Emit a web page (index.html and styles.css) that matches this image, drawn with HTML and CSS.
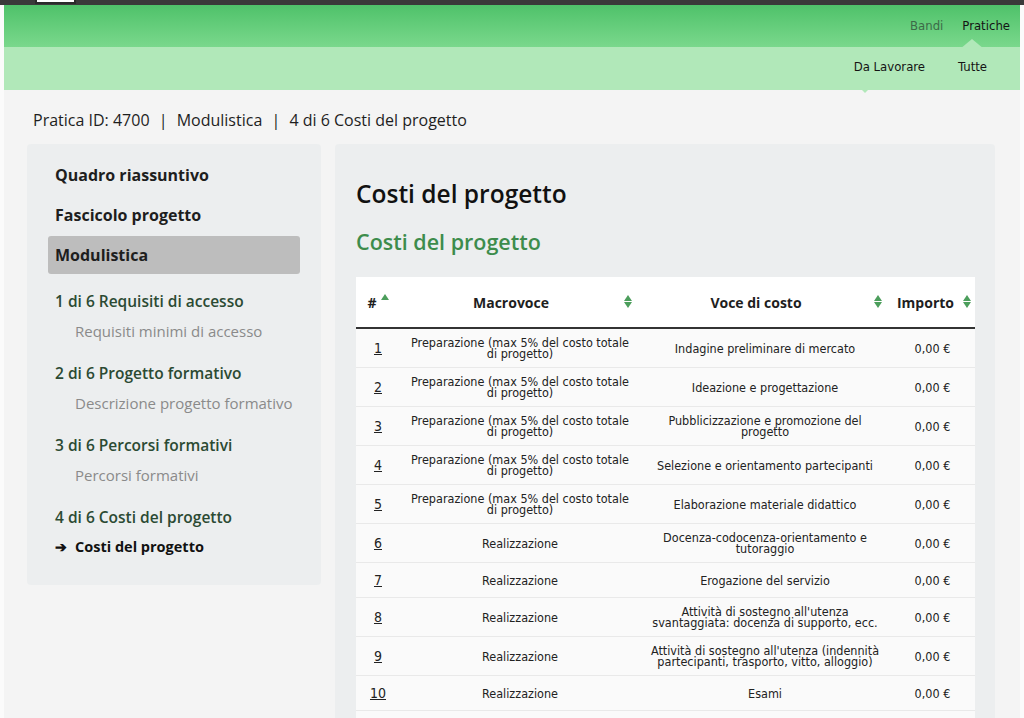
FILE: index.html
```html
<!DOCTYPE html>
<html lang="it">
<head>
<meta charset="utf-8">
<title>Costi del progetto</title>
<link rel="stylesheet" href="styles.css">
</head>
<body>
<div class="topbar"><div class="logo"></div></div>
<div class="page">
  <nav class="nav-main">
    <a class="nav-link">Bandi</a>
    <a class="nav-link active">Pratiche</a>
  </nav>
  <nav class="nav-sub">
    <a class="sub-link active">Da Lavorare</a>
    <a class="sub-link">Tutte</a>
  </nav>
  <main class="content">
    <div class="breadcrumb">Pratica ID: 4700 <span class="sep">|</span> Modulistica <span class="sep">|</span> 4 di 6 Costi del progetto</div>
    <div class="layout">
      <aside class="sidebar">
        <div class="side-item">Quadro riassuntivo</div>
        <div class="side-item">Fascicolo progetto</div>
        <div class="side-item selected">Modulistica</div>
        <div class="steps">
          <div class="step-title">1 di 6 Requisiti di accesso</div>
          <div class="step-sub">Requisiti minimi di accesso</div>
          <div class="step-title">2 di 6 Progetto formativo</div>
          <div class="step-sub">Descrizione progetto formativo</div>
          <div class="step-title">3 di 6 Percorsi formativi</div>
          <div class="step-sub">Percorsi formativi</div>
          <div class="step-title">4 di 6 Costi del progetto</div>
          <div class="step-sub current"><span class="arrow">&#10132;</span>Costi del progetto</div>
        </div>
      </aside>
      <section class="panel">
        <h1 class="title">Costi del progetto</h1>
        <h2 class="subtitle">Costi del progetto</h2>
        <table class="grid">
          <colgroup>
            <col class="c-num"><col class="c-macro"><col class="c-voce"><col class="c-imp">
          </colgroup>
          <thead>
            <tr>
              <th class="th-num">#<span class="sort-up"></span></th>
              <th class="th-sort">Macrovoce<span class="sort"></span></th>
              <th class="th-sort">Voce di costo<span class="sort"></span></th>
              <th class="th-sort th-imp">Importo<span class="sort"></span></th>
            </tr>
          </thead>
          <tbody>
            <tr><td class="num"><a>1</a></td><td>Preparazione (max 5% del costo totale di progetto)</td><td>Indagine preliminare di mercato</td><td>0,00 €</td></tr>
            <tr><td class="num"><a>2</a></td><td>Preparazione (max 5% del costo totale di progetto)</td><td>Ideazione e progettazione</td><td>0,00 €</td></tr>
            <tr><td class="num"><a>3</a></td><td>Preparazione (max 5% del costo totale di progetto)</td><td>Pubblicizzazione e promozione del progetto</td><td>0,00 €</td></tr>
            <tr><td class="num"><a>4</a></td><td>Preparazione (max 5% del costo totale di progetto)</td><td>Selezione e orientamento partecipanti</td><td>0,00 €</td></tr>
            <tr><td class="num"><a>5</a></td><td>Preparazione (max 5% del costo totale di progetto)</td><td>Elaborazione materiale didattico</td><td>0,00 €</td></tr>
            <tr><td class="num"><a>6</a></td><td>Realizzazione</td><td>Docenza-codocenza-orientamento e tutoraggio</td><td>0,00 €</td></tr>
            <tr><td class="num"><a>7</a></td><td>Realizzazione</td><td>Erogazione del servizio</td><td>0,00 €</td></tr>
            <tr><td class="num"><a>8</a></td><td>Realizzazione</td><td>Attività di sostegno all'utenza svantaggiata: docenza di supporto, ecc.</td><td>0,00 €</td></tr>
            <tr><td class="num"><a>9</a></td><td>Realizzazione</td><td>Attività di sostegno all'utenza (indennità partecipanti, trasporto, vitto, alloggio)</td><td>0,00 €</td></tr>
            <tr><td class="num"><a>10</a></td><td>Realizzazione</td><td>Esami</td><td>0,00 €</td></tr>
            <tr class="row-last"><td class="num"></td><td></td><td></td><td></td></tr>
          </tbody>
        </table>
      </section>
    </div>
  </main>
</div>
</body>
</html>
```
FILE: styles.css
```css
html, body {
  margin: 0;
  padding: 0;
  background: #fbfbfb;
  font-family: "Open Sans", "Noto Sans", sans-serif;
  color: #1e1e1e;
}
.topbar {
  height: 5px;
  background: #3a3a3a;
  overflow: hidden;
}
.logo {
  width: 37px;
  height: 2px;
  margin-left: 35px;
  background: #ffffff;
  border: 2px solid #2a2a2a;
  border-top: none;
}
.page {
  margin: 0 4px;
  background: #f4f4f4;
  min-height: 713px;
}
.nav-main {
  height: 42px;
  background: linear-gradient(#4fc26a, #7ad88c);
  display: flex;
  justify-content: flex-end;
  align-items: center;
  gap: 19px;
  padding-right: 10px;
  font-family: "DejaVu Sans Condensed", "Liberation Sans Narrow", "Liberation Sans", sans-serif;
  font-size: 13px;
}
.nav-link {
  color: #3c6a48;
  position: relative;
  padding-bottom: 1px;
}
.nav-link.active {
  color: #141414;
}
.nav-link.active::after {
  content: "";
  position: absolute;
  left: -2px;
  top: 21px;
  border-left: 12px solid transparent;
  border-right: 12px solid transparent;
  border-bottom: 10px solid #b1e8b9;
}
.nav-sub {
  height: 43px;
  background: #b1e8b9;
  display: flex;
  justify-content: flex-end;
  align-items: center;
  gap: 33px;
  padding-right: 33px;
  padding-bottom: 4px;
  box-sizing: border-box;
  font-family: "DejaVu Sans Condensed", "Liberation Sans Narrow", "Liberation Sans", sans-serif;
  font-size: 13px;
}
.sub-link {
  color: #141414;
  position: relative;
}
.sub-link.active::after {
  content: "";
  position: absolute;
  left: 3px;
  top: 26px;
  border-left: 8px solid transparent;
  border-right: 8px solid transparent;
  border-top: 8px solid #b1e8b9;
}
.content {
  padding: 18px 25px 0 23px;
}
.breadcrumb {
  font-size: 16px;
  line-height: 24px;
  padding-left: 6px;
  color: #1e1e1e;
  margin-bottom: 12px;
}
.sep {
  margin: 0 5px;
}
.layout {
  display: flex;
  align-items: flex-start;
  gap: 14px;
}
.sidebar {
  width: 294px;
  flex: none;
  background: #eceeef;
  border-radius: 4px;
  padding: 12px 0 28px;
  box-sizing: border-box;
}
.side-item {
  margin: 0 21px 2px;
  padding: 0 7px;
  height: 38px;
  line-height: 38px;
  font-weight: 700;
  font-size: 16px;
  color: #1e1e1e;
  border-radius: 3px;
}
.side-item.selected {
  background: #bdbdbd;
}
.steps {
  padding: 15px 28px 0;
}
.step-title {
  font-size: 15.5px;
  font-weight: 600;
  line-height: 20px;
  color: #2b4a33;
  margin-top: 22px;
}
.step-title:first-child {
  margin-top: 0;
}
.step-sub {
  font-size: 15px;
  line-height: 20px;
  color: #8a8a8a;
  margin-top: 10px;
  padding-left: 20px;
}
.step-sub.current {
  padding-left: 0;
  color: #111;
  font-weight: 700;
  font-size: 14.5px;
}
.arrow {
  display: inline-block;
  width: 20px;
  font-size: 14px;
}
.panel {
  flex: 1;
  background: #eceeef;
  border-radius: 4px;
  padding: 30px 20px 0 21px;
  min-height: 600px;
}
.title {
  margin: 0;
  font-size: 24.5px;
  font-weight: 600;
  line-height: 40px;
  color: #111;
}
.subtitle {
  margin: 12px 0 19px;
  font-size: 21.5px;
  font-weight: 600;
  line-height: 32px;
  color: #3d8c4c;
}
.grid {
  width: 100%;
  border-collapse: collapse;
  table-layout: fixed;
  font-family: "DejaVu Sans Condensed", "Liberation Sans Narrow", "Liberation Sans", sans-serif;
}
.c-num { width: 44px; }
.c-macro { width: 240px; }
.c-voce { width: 250px; }
.c-imp { width: 85px; }
.grid th {
  background: #fff;
  height: 50px;
  font-size: 14px;
  font-weight: 700;
  font-family: "Open Sans", sans-serif;
  border-bottom: 2px solid #333;
  position: relative;
  padding: 0 18px 0 0;
  text-align: center;
}
.grid th.th-num {
  padding: 0;
  text-align: center;
}
.grid th.th-imp {
  padding-right: 14px;
}
.sort {
  position: absolute;
  right: 8px;
  top: 18px;
  width: 8px;
  height: 14px;
}
.th-imp .sort { right: 4px; }
.sort::before, .sort::after, .sort-up::before {
  content: "";
  position: absolute;
  left: 0;
  border-left: 4px solid transparent;
  border-right: 4px solid transparent;
}
.sort::before {
  top: 0;
  border-bottom: 6px solid #4c9e5c;
}
.sort::after {
  top: 7px;
  border-top: 6px solid #4c9e5c;
}
.sort-up {
  display: inline-block;
  position: relative;
  width: 8px;
  height: 12px;
  margin-left: 4px;
  vertical-align: top;
  top: 1px;
}
.sort-up::before {
  top: 0;
  border-bottom: 6px solid #4c9e5c;
}
.grid td {
  background: #fafafa;
  border-bottom: 1px solid #e9e9e9;
  font-size: 12.5px;
  line-height: 11px;
  padding: 8px 6px;
  text-align: center;
  color: #222;
  vertical-align: middle;
}
.grid td.num {
  font-size: 14px;
  line-height: 18px;
}
.grid td.num a {
  text-decoration: underline;
  color: #222;
}
.row-last td {
  height: 18px;
}
```
